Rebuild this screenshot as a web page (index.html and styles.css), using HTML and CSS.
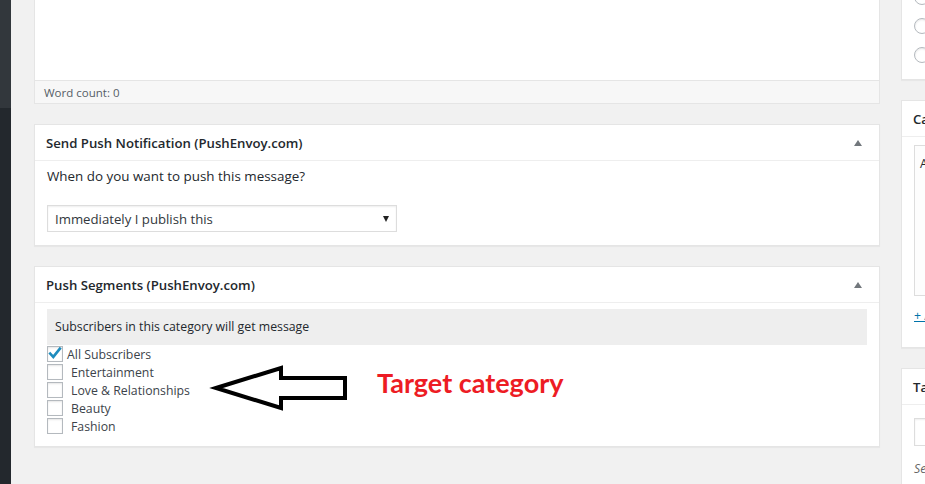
FILE: index.html
```html
<!DOCTYPE html>
<html>
<head>
<meta charset="utf-8">
<link rel="stylesheet" href="styles.css">
</head>
<body>
<div class="wp">
  <div class="adminmenu">
    <div class="menu-top"></div>
    <div class="menu-rest"></div>
  </div>
  <div class="content">
    <div class="main-col">
      <div class="editor">
        <div class="editor-area"></div>
        <div class="status">Word count: 0</div>
      </div>

      <div class="postbox">
        <div class="hndle"><span>Send Push Notification (PushEnvoy.com)</span><span class="toggle"></span></div>
        <div class="inside">
          <p class="question">When do you want to push this message?</p>
          <div class="select-wrap">
            <select class="select">
              <option>Immediately I publish this</option>
            </select>
          </div>
        </div>
      </div>

      <div class="postbox segments">
        <div class="hndle"><span>Push Segments (PushEnvoy.com)</span><span class="toggle"></span></div>
        <div class="inside">
          <div class="notice">Subscribers in this category will get message</div>
          <ul class="cats">
            <li class="cat checked"><span class="cb"><svg viewBox="0 0 16 16" width="16" height="16"><path d="M3.2 7.6 L6.3 10.9 L12.9 2.6" fill="none" stroke="#1e8cbe" stroke-width="2.6" stroke-linecap="square"/></svg></span><span class="lbl">All Subscribers</span></li>
            <li class="cat"><span class="cb"></span><span class="lbl">Entertainment</span></li>
            <li class="cat"><span class="cb"></span><span class="lbl">Love &amp; Relationships</span></li>
            <li class="cat"><span class="cb"></span><span class="lbl">Beauty</span></li>
            <li class="cat"><span class="cb"></span><span class="lbl">Fashion</span></li>
          </ul>
          <svg class="arrow" viewBox="0 0 150 55" width="150" height="55"><polygon points="9,27 74,7 74,17 138,17 138,37 74,37 74,47" fill="none" stroke="#000" stroke-width="4" stroke-linejoin="miter"/></svg>
          <div class="annot">Target category</div>
        </div>
      </div>
    </div>

    <div class="side-col">
      <div class="sidebox formats">
        <div class="radios">
          <span class="radio"></span>
          <span class="radio"></span>
          <span class="radio"></span>
        </div>
      </div>

      <div class="sidebox">
        <div class="hndle"><span>Categories</span></div>
        <div class="inside">
          <div class="cat-panel">All Categories</div>
          <a class="add-link" href="#">+ Add New Category</a>
        </div>
      </div>

      <div class="sidebox">
        <div class="hndle"><span>Tags</span></div>
        <div class="inside">
          <div class="tag-input"></div>
          <p class="howto">Separate tags with commas</p>
        </div>
      </div>
    </div>
  </div>
</div>
</body>
</html>
```

FILE: styles.css
```css
html, body {
  margin: 0;
  padding: 0;
  height: 484px;
  overflow: hidden;
  background: #f1f1f1;
  font-family: "Open Sans", sans-serif;
  font-size: 12.3px;
  color: #32373c;
}

.wp {
  display: flex;
  height: 484px;
}

.adminmenu {
  width: 11px;
  flex: none;
  display: flex;
  flex-direction: column;
}
.menu-top {
  height: 108px;
  background: #32373c;
}
.menu-rest {
  flex: 1;
  background: #23282d;
}

.content {
  display: flex;
  flex: 1;
  min-width: 0;
  padding-left: 23px;
  gap: 21px;
}

.main-col {
  width: 846px;
  flex: none;
}

.editor {
  border: 1px solid #e5e5e5;
  border-top: none;
  background: #fff;
}
.editor-area {
  height: 80px;
}
.status {
  height: 22px;
  line-height: 23px;
  padding: 0 9px;
  border-top: 1px solid #e5e5e5;
  background: #f7f7f7;
  color: #555d66;
  font-size: 11.5px;
}

.postbox,
.sidebox {
  background: #fff;
  border: 1px solid #e5e5e5;
  box-shadow: 0 1px 1px rgba(0, 0, 0, 0.04);
  margin-top: 20px;
}

.hndle {
  height: 35px;
  line-height: 36px;
  padding: 0 11px;
  border-bottom: 1px solid #eee;
  font-size: 13.2px;
  font-weight: 600;
  color: #23282d;
  display: flex;
  justify-content: space-between;
  align-items: center;
}

.toggle {
  width: 0;
  height: 0;
  border-left: 4px solid transparent;
  border-right: 4px solid transparent;
  border-bottom: 6px solid #72777c;
  margin-right: 6px;
}

.inside {
  padding: 0 12px 13px;
}

.question {
  margin: 6px 0 20px;
  line-height: 18px;
  font-size: 13.4px;
  color: #23282d;
}

.select-wrap {
  position: relative;
  width: 350px;
}
.select {
  display: block;
  width: 350px;
  height: 27px;
  margin: 0;
  padding: 0 7px;
  border: 1px solid #ddd;
  border-radius: 0;
  box-shadow: inset 0 1px 2px rgba(0, 0, 0, 0.07);
  background: #fff;
  font-family: "Open Sans", sans-serif;
  font-size: 13.2px;
  color: #32373c;
  -webkit-appearance: none;
  appearance: none;
  outline: none;
}
.select-wrap::after {
  content: "";
  position: absolute;
  right: 8px;
  top: 11px;
  border-left: 3px solid transparent;
  border-right: 3px solid transparent;
  border-top: 6px solid #222;
}

.segments .inside {
  position: relative;
  padding-bottom: 10px;
}

.notice {
  margin-top: 6px;
  height: 36px;
  line-height: 36px;
  padding: 0 8px;
  background: #eee;
  color: #23282d;
}

.cats {
  list-style: none;
  margin: 1px 0 0;
  padding: 0;
}
.cat {
  height: 18px;
  display: flex;
  align-items: flex-start;
}
.cb {
  width: 14px;
  height: 14px;
  border: 1px solid #b4b9be;
  background: #fff;
  box-shadow: inset 0 1px 2px rgba(0, 0, 0, 0.1);
  flex: none;
  position: relative;
}
.cb svg {
  position: absolute;
  left: -1px;
  top: -1px;
}
.lbl {
  line-height: 17px;
  margin-left: 8px;
  color: #3c434a;
}
.cat.checked .lbl {
  margin-left: 4px;
}

.arrow {
  position: absolute;
  left: 172px;
  top: 52px;
}
.annot {
  position: absolute;
  left: 342px;
  top: 59px;
  font-family: "Lato", sans-serif;
  font-weight: 700;
  font-size: 27px;
  line-height: 30px;
  color: #ed1c24;
  white-space: nowrap;
}

.side-col {
  flex: 1;
  min-width: 0;
  overflow: hidden;
}
.side-col .sidebox {
  width: 280px;
}
.side-col .formats {
  margin-top: 0;
  border-top: none;
  height: 79px;
  overflow: hidden;
}
.radios {
  height: 79px;
  padding: 0 12px;
  box-sizing: border-box;
  display: flex;
  flex-direction: column;
  justify-content: flex-end;
  padding-bottom: 16px;
  gap: 13px;
}
.radio {
  width: 14px;
  height: 14px;
  flex: none;
  border: 1px solid #b4b9be;
  border-radius: 50%;
  background: #fff;
  box-shadow: inset 0 1px 2px rgba(0, 0, 0, 0.1);
}

.cat-panel {
  margin-top: 8px;
  height: 131px;
  border: 1px solid #ddd;
  background: #fdfdfd;
  padding: 9px 5px;
  font-size: 12.3px;
  color: #23282d;
}
.add-link {
  display: block;
  margin-top: 11px;
  line-height: 18px;
  color: #0073aa;
  text-decoration: underline;
  padding-bottom: 9px;
}

.tag-input {
  margin-top: 13px;
  height: 26px;
  border: 1px solid #ddd;
  box-shadow: inset 0 1px 2px rgba(0, 0, 0, 0.07);
}
.howto {
  margin: 14px 0 0;
  font-style: italic;
  color: #666;
}
```
